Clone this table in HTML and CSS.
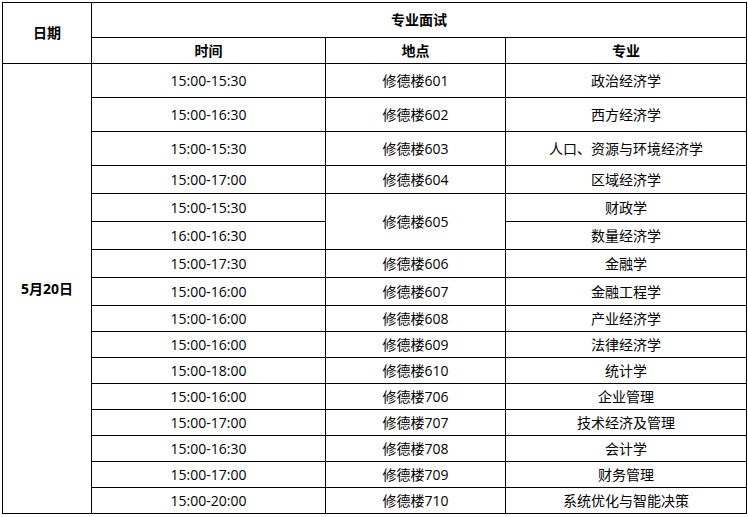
FILE: index.html
```html
<!DOCTYPE html>
<html lang="zh">
<head>
<meta charset="utf-8">
<title>专业面试安排</title>
<link rel="stylesheet" href="styles.css">
</head>
<body>
<table class="schedule">
  <colgroup>
    <col class="c-date">
    <col class="c-time">
    <col class="c-place">
    <col class="c-major">
  </colgroup>
  <thead>
    <tr class="h1">
      <th rowspan="2">日期</th>
      <th colspan="3">专业面试</th>
    </tr>
    <tr class="h2">
      <th>时间</th>
      <th>地点</th>
      <th>专业</th>
    </tr>
  </thead>
  <tbody>
    <tr class="r34">
      <th rowspan="16" class="date">5月20日</th>
      <td>15:00-15:30</td><td>修德楼601</td><td>政治经济学</td>
    </tr>
    <tr class="r34"><td>15:00-16:30</td><td>修德楼602</td><td>西方经济学</td></tr>
    <tr class="r34"><td>15:00-15:30</td><td>修德楼603</td><td>人口、资源与环境经济学</td></tr>
    <tr class="r28"><td>15:00-17:00</td><td>修德楼604</td><td>区域经济学</td></tr>
    <tr class="r28"><td>15:00-15:30</td><td rowspan="2">修德楼605</td><td>财政学</td></tr>
    <tr class="r28"><td>16:00-16:30</td><td>数量经济学</td></tr>
    <tr class="r28"><td>15:00-17:30</td><td>修德楼606</td><td>金融学</td></tr>
    <tr class="r28"><td>15:00-16:00</td><td>修德楼607</td><td>金融工程学</td></tr>
    <tr class="r26"><td>15:00-16:00</td><td>修德楼608</td><td>产业经济学</td></tr>
    <tr class="r26"><td>15:00-16:00</td><td>修德楼609</td><td>法律经济学</td></tr>
    <tr class="r26"><td>15:00-18:00</td><td>修德楼610</td><td>统计学</td></tr>
    <tr class="r26"><td>15:00-16:00</td><td>修德楼706</td><td>企业管理</td></tr>
    <tr class="r26"><td>15:00-17:00</td><td>修德楼707</td><td>技术经济及管理</td></tr>
    <tr class="r26"><td>15:00-16:30</td><td>修德楼708</td><td>会计学</td></tr>
    <tr class="r26"><td>15:00-17:00</td><td>修德楼709</td><td>财务管理</td></tr>
    <tr class="r26"><td>15:00-20:00</td><td>修德楼710</td><td>系统优化与智能决策</td></tr>
  </tbody>
</table>
</body>
</html>
```
FILE: styles.css
```css
html, body {
  margin: 0;
  padding: 0;
  background: #fff;
}

body {
  font-family: "Open Sans", "Noto Sans CJK SC", sans-serif;
  font-size: 14px;
  color: #000;
}

.schedule {
  margin: 2px 0 0 2px;
  border-collapse: collapse;
  table-layout: fixed;
  width: 744px;
}

.c-date { width: 89px; }
.c-time { width: 234px; }
.c-place { width: 180px; }
.c-major { width: 241px; }

.schedule th,
.schedule td {
  border: 1px solid #000;
  padding: 0;
  text-align: center;
  vertical-align: middle;
  line-height: 18px;
  white-space: nowrap;
}

.schedule th {
  font-weight: bold;
}

.h1 { height: 35px; }
.h2 { height: 26px; }
.r34 { height: 34px; }
.r28 { height: 28px; }
.r26 { height: 26px; }
```
